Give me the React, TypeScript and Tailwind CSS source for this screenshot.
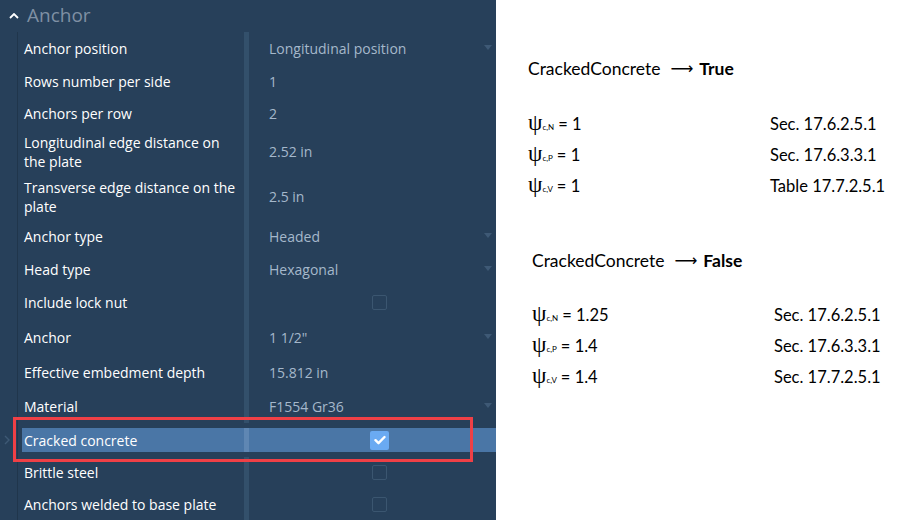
import { Fragment } from "react";

type Row = {
  label: string;
  value?: string;
  h: number;
  kind?: "select" | "text" | "check";
  checked?: boolean;
  selected?: boolean;
};

const rows: Row[] = [
  { label: "Anchor position", value: "Longitudinal position", h: 33, kind: "select" },
  { label: "Rows number per side", value: "1", h: 33, kind: "text" },
  { label: "Anchors per row", value: "2", h: 31, kind: "text" },
  { label: "Longitudinal edge distance on the plate", value: "2.52 in", h: 45, kind: "text" },
  { label: "Transverse edge distance on the plate", value: "2.5 in", h: 45, kind: "text" },
  { label: "Anchor type", value: "Headed", h: 34, kind: "select" },
  { label: "Head type", value: "Hexagonal", h: 33, kind: "select" },
  { label: "Include lock nut", h: 33, kind: "check" },
  { label: "Anchor", value: "1 1/2\"", h: 36, kind: "select" },
  { label: "Effective embedment depth", value: "15.812 in", h: 34, kind: "text" },
  { label: "Material", value: "F1554 Gr36", h: 34, kind: "select" },
  { label: "Cracked concrete", h: 34, kind: "check", checked: true, selected: true },
  { label: "Brittle steel", h: 31, kind: "check" },
  { label: "Anchors welded to base plate", h: 32, kind: "check" },
];

const groups = [
  {
    value: "True",
    pad: "pl-[32px] pt-[58px]",
    list: "mt-[31px]",
    items: [
      { sub: "c,N", v: "1", ref: "Sec. 17.6.2.5.1" },
      { sub: "c,P", v: "1", ref: "Sec. 17.6.3.3.1" },
      { sub: "c,V", v: "1", ref: "Table 17.7.2.5.1" },
    ],
  },
  {
    value: "False",
    pad: "pl-[36px] pt-[53px]",
    list: "mt-[30px]",
    items: [
      { sub: "c,N", v: "1.25", ref: "Sec. 17.6.2.5.1" },
      { sub: "c,P", v: "1.4", ref: "Sec. 17.6.3.3.1" },
      { sub: "c,V", v: "1.4", ref: "Sec. 17.7.2.5.1" },
    ],
  },
];

function Caret() {
  return (
    <svg width="8" height="5" viewBox="0 0 8 5" className="ml-auto mr-[4px] mb-[2px]">
      <path d="M0 0h8L4 5z" fill="#3e5975" />
    </svg>
  );
}

function CheckBox({ checked }: { checked?: boolean }) {
  if (checked) {
    return (
      <div className="ml-[121px] flex h-[19px] w-[19px] items-center justify-center rounded-[2px] bg-[#6aaaf2]">
        <svg width="12" height="10" viewBox="0 0 12 10">
          <path d="M1.5 5.2l3 3L10.5 2" stroke="#fff" strokeWidth="2.4" fill="none" strokeLinecap="round" strokeLinejoin="round" />
        </svg>
      </div>
    );
  }
  return <div className="ml-[123px] h-[15px] w-[15px] rounded-[2px] border border-[#3b5670]" />;
}

export default function App() {
  return (
    <div className="flex h-[520px] w-[924px] overflow-hidden bg-white font-['Open_Sans',sans-serif]">
      <div className="relative w-[496px] shrink-0 bg-[#27405a]">
        <div className="flex h-[32px] items-center">
          <svg width="10" height="6" viewBox="0 0 10 6" className="ml-[9px] mb-[1px]">
            <path d="M1 5l4-4 4 4" stroke="#ffffff" strokeWidth="1.8" fill="none" />
          </svg>
          <span className="ml-[8px] mb-[1px] text-[19px] leading-none text-[#7f90a4]">Anchor</span>
        </div>

        <div className="flex flex-col">
          {rows.map((r) => (
            <div key={r.label} className="flex" style={{ height: r.h }}>
              <div className="flex w-[18px] shrink-0 items-center justify-center border-r border-[#20364c]">
                {r.selected ? (
                  <svg width="6" height="10" viewBox="0 0 6 10" className="mr-[4px]">
                    <path d="M1 1l4 4-4 4" stroke="#3e5975" strokeWidth="1.4" fill="none" />
                  </svg>
                ) : null}
              </div>
              <div className="w-[4px] shrink-0" />
              <div className={`flex flex-1 ${r.selected ? "my-[5px] bg-[#4a76a6]" : ""}`}>
                <div className="flex w-[222px] shrink-0 items-center pl-[2px] pr-[3px] text-[14px] leading-[19px] text-white">
                  {r.label}
                </div>
                <div className={`w-[5px] shrink-0 ${r.selected ? "bg-[#5f87b3]" : "bg-[#33506b]"}`} />
                <div className="flex flex-1 items-center">
                  {r.kind === "check" ? (
                    <CheckBox checked={r.checked} />
                  ) : (
                    <Fragment>
                      <span className="pl-[20px] text-[14px] text-[#a5b8cb]">{r.value}</span>
                      {r.kind === "select" ? <Caret /> : null}
                    </Fragment>
                  )}
                </div>
              </div>
            </div>
          ))}
        </div>

        <div className="pointer-events-none absolute left-[13px] top-[417px] h-[45px] w-[460px] border-[3px] border-[#ef4046]" />
      </div>

      <div className="flex-1 font-['Lato',sans-serif] text-black">
        {groups.map((g) => (
          <div key={g.value} className={g.pad}>
            <div className="flex items-center text-[17.5px] leading-[22px]">
              <span>CrackedConcrete</span>
              <span className="ml-[10px] font-['DejaVu_Sans',sans-serif] text-[16px]">⟶</span>
              <span className="ml-[6px] font-bold">{g.value}</span>
            </div>
            <div className={`${g.list} flex flex-col gap-[7px]`}>
              {g.items.map((it) => (
                <div key={it.sub} className="grid h-[24px] grid-cols-[242px_1fr] items-center text-[16.5px]">
                  <div className="flex items-baseline">
                    <span className="font-['Liberation_Serif',serif] text-[23px] leading-none">ψ</span>
                    <span className="text-[8px] leading-none">{it.sub}</span>
                    <span className="ml-[4px]">= {it.v}</span>
                  </div>
                  <div>{it.ref}</div>
                </div>
              ))}
            </div>
          </div>
        ))}
      </div>
    </div>
  );
}
